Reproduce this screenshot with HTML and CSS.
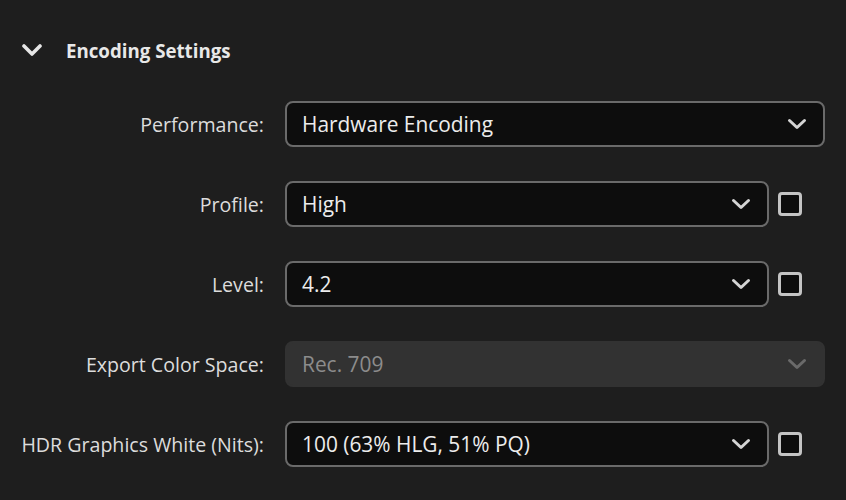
FILE: index.html
```html
<!DOCTYPE html>
<html>
<head>
<meta charset="utf-8">
<link rel="stylesheet" href="styles.css">
</head>
<body>
<div class="panel">
  <div class="section-head">
    <svg class="head-chev" width="20" height="12" viewBox="0 0 20 12"><path d="M2 2 L10 10 L18 2" fill="none" stroke="#e6e6e6" stroke-width="3.6" stroke-linecap="round" stroke-linejoin="round"/></svg>
    <span class="head-title">Encoding Settings</span>
  </div>
  <div class="rows">
    <div class="row">
      <div class="label">Performance:</div>
      <div class="control">
        <div class="select"><span class="value">Hardware Encoding</span><svg class="chev" width="20" height="12" viewBox="0 0 20 12"><path d="M2.5 2.5 L10 9.5 L17.5 2.5" fill="none" stroke="#d4d4d4" stroke-width="3" stroke-linecap="round" stroke-linejoin="round"/></svg></div>
      </div>
    </div>
    <div class="row">
      <div class="label">Profile:</div>
      <div class="control">
        <div class="select"><span class="value">High</span><svg class="chev" width="20" height="12" viewBox="0 0 20 12"><path d="M2.5 2.5 L10 9.5 L17.5 2.5" fill="none" stroke="#d4d4d4" stroke-width="3" stroke-linecap="round" stroke-linejoin="round"/></svg></div>
        <div class="checkbox"></div>
      </div>
    </div>
    <div class="row">
      <div class="label">Level:</div>
      <div class="control">
        <div class="select"><span class="value">4.2</span><svg class="chev" width="20" height="12" viewBox="0 0 20 12"><path d="M2.5 2.5 L10 9.5 L17.5 2.5" fill="none" stroke="#d4d4d4" stroke-width="3" stroke-linecap="round" stroke-linejoin="round"/></svg></div>
        <div class="checkbox"></div>
      </div>
    </div>
    <div class="row">
      <div class="label">Export Color Space:</div>
      <div class="control">
        <div class="select disabled"><span class="value">Rec. 709</span><svg class="chev" width="20" height="12" viewBox="0 0 20 12"><path d="M2.5 2.5 L10 9.5 L17.5 2.5" fill="none" stroke="#6a6a6a" stroke-width="3" stroke-linecap="round" stroke-linejoin="round"/></svg></div>
      </div>
    </div>
    <div class="row">
      <div class="label">HDR Graphics White (Nits):</div>
      <div class="control">
        <div class="select"><span class="value">100 (63% HLG, 51% PQ)</span><svg class="chev" width="20" height="12" viewBox="0 0 20 12"><path d="M2.5 2.5 L10 9.5 L17.5 2.5" fill="none" stroke="#d4d4d4" stroke-width="3" stroke-linecap="round" stroke-linejoin="round"/></svg></div>
        <div class="checkbox"></div>
      </div>
    </div>
  </div>
</div>
</body>
</html>
```
FILE: styles.css
```css
html, body {
  margin: 0;
  padding: 0;
  background: #1e1e1e;
}
body {
  width: 846px;
  height: 500px;
  overflow: hidden;
  font-family: "Open Sans", "Noto Sans", sans-serif;
  color: #dcdcdc;
}
.panel {
  padding-top: 36px;
}
.section-head {
  display: flex;
  align-items: center;
  height: 28px;
  padding-left: 22px;
}
.head-chev {
  display: block;
  margin-right: 24px;
}
.head-title {
  font-size: 18.7px;
  font-weight: 700;
  color: #e8e8e8;
}
.rows {
  margin-top: 37px;
  display: flex;
  flex-direction: column;
  gap: 34px;
}
.row {
  display: grid;
  grid-template-columns: 264px 1fr;
  column-gap: 21px;
  align-items: center;
  height: 46px;
  padding-right: 21px;
}
.label {
  text-align: right;
  font-size: 19.6px;
  color: #dcdcdc;
}
.control {
  display: flex;
  align-items: center;
  height: 46px;
}
.select {
  flex: 1;
  box-sizing: border-box;
  height: 46px;
  border: 2px solid #6a6a6a;
  border-radius: 8px;
  background: #0d0d0d;
  display: flex;
  align-items: center;
  justify-content: space-between;
  padding: 0 16px 0 15px;
}
.select.disabled {
  border-color: #323232;
  background: #323232;
}
.value {
  font-size: 20.9px;
  color: #ececec;
}
.select.disabled .value {
  color: #8c8c8c;
}
.chev {
  display: block;
}
.checkbox {
  box-sizing: border-box;
  width: 24px;
  height: 24px;
  margin-left: 9px;
  margin-right: 23px;
  border: 3px solid #c4c4c4;
  border-radius: 4px;
  background: #0d0d0d;
}
```
